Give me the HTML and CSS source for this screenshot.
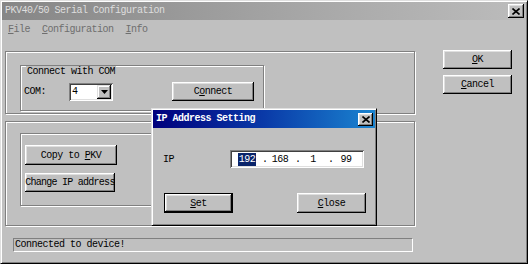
FILE: index.html
```html
<!DOCTYPE html>
<html lang="en">
<head>
    <meta charset="UTF-8">
    <title>PKV40/50 Serial Configuration</title>
    <link rel="stylesheet" href="styles.css">
</head>
<body>
    <div class="window">
        <div class="titlebar titlebar-inactive">
            <span class="title-text">PKV40/50 Serial Configuration</span>
            <span class="caption-btn">
                <svg width="8" height="7" viewBox="0 0 8 7"><path d="M0.5 0.5L7.5 6.5M7.5 0.5L0.5 6.5"/></svg>
            </span>
        </div>
        <div class="menubar">
            <span class="menu-item"><u>F</u>ile</span>
            <span class="menu-item"><u>C</u>onfiguration</span>
            <span class="menu-item"><u>I</u>nfo</span>
        </div>
        <div class="client">
            <div class="main-row">
                <div class="left-col">
                    <div class="panel panel-top">
                        <div class="group group-com">
                            <span class="group-title">Connect with COM</span>
                            <div class="com-row">
                                <span class="com-label">COM:</span>
                                <div class="combo">
                                    <span class="combo-value">4</span>
                                    <span class="combo-btn">
                                        <svg width="7" height="4" viewBox="0 0 7 4"><polygon points="0,0 7,0 3.5,4"/></svg>
                                    </span>
                                </div>
                                <button class="btn btn-connect"><span>C<u>o</u>nnect</span></button>
                            </div>
                        </div>
                    </div>
                    <div class="panel panel-bottom">
                        <div class="group group-actions">
                            <button class="btn btn-copy"><span>Copy to <u>P</u>KV</span></button>
                            <button class="btn btn-change"><span>Change IP address</span></button>
                        </div>
                    </div>
                </div>
                <div class="right-col">
                    <button class="btn btn-side"><span><u>O</u>K</span></button>
                    <button class="btn btn-side"><span><u>C</u>ancel</span></button>
                </div>
            </div>
            <div class="statusbar">Connected to device!</div>
        </div>

        <div class="dialog">
            <div class="titlebar titlebar-active">
                <span class="title-text">IP Address Setting</span>
                <span class="caption-btn caption-btn-small">
                    <svg width="8" height="7" viewBox="0 0 8 7"><path d="M0.5 0.5L7.5 6.5M7.5 0.5L0.5 6.5"/></svg>
                </span>
            </div>
            <div class="dialog-body">
                <div class="ip-row">
                    <span class="ip-label">IP</span>
                    <div class="ip-field">
                        <span class="ip-part"><span class="ip-selected">192</span></span>
                        <span class="ip-dot">.</span>
                        <span class="ip-part">168</span>
                        <span class="ip-dot">.</span>
                        <span class="ip-part">1</span>
                        <span class="ip-dot">.</span>
                        <span class="ip-part">99</span>
                    </div>
                </div>
                <div class="dialog-buttons">
                    <button class="btn btn-dialog btn-default"><span><u>S</u>et</span></button>
                    <button class="btn btn-dialog"><span><u>C</u>lose</span></button>
                </div>
            </div>
        </div>
    </div>
</body>
</html>
```

FILE: styles.css
```css
body, html {
    margin: 0;
    padding: 0;
    background-color: #c0c0c0;
    font-family: "Liberation Mono", "DejaVu Sans Mono", monospace;
    font-size: 10px;
    letter-spacing: -0.5px;
    color: black;
}
.window {
    position: relative;
    width: 528px;
    height: 264px;
    box-sizing: border-box;
    padding: 1px;
    border: 1px solid;
    border-color: #dfdfdf #000 #000 #dfdfdf;
    box-shadow: inset 1px 1px 0 #fff, inset -1px -1px 0 #808080;
    background-color: #c0c0c0;
    display: flex;
    flex-direction: column;
}
.titlebar {
    height: 18px;
    display: flex;
    align-items: center;
    justify-content: space-between;
    padding: 0 2px 0 3px;
    flex-shrink: 0;
}
.titlebar-inactive {
    background: linear-gradient(to right, #868686, #a8a8a8 60%, #bcbcbc);
    color: #dedede;
}
.titlebar-active {
    background: linear-gradient(to right, #00007c, #0a3aa8 50%, #1a84d0);
    color: white;
    font-weight: bold;
}
.title-text {
    line-height: 18px;
    white-space: nowrap;
}
.caption-btn {
    width: 16px;
    height: 14px;
    box-sizing: border-box;
    background-color: #c0c0c0;
    box-shadow: inset -1px -1px 0 #000, inset 1px 1px 0 #fff, inset -2px -2px 0 #808080, inset 2px 2px 0 #dfdfdf;
    display: flex;
    align-items: center;
    justify-content: center;
}
.caption-btn-small {
    width: 15px;
    height: 13px;
}
.caption-btn svg path {
    stroke: black;
    stroke-width: 1.6;
    fill: none;
}
.menubar {
    height: 18px;
    display: flex;
    align-items: center;
    color: #6e6e6e;
    flex-shrink: 0;
}
.menu-item {
    padding: 0 6px;
    white-space: nowrap;
}
.client {
    flex: 1;
    padding: 12px 0 0 3px;
}
.main-row {
    display: flex;
}
.left-col {
    width: 410px;
}
.panel {
    box-sizing: border-box;
    border: 1px solid #808080;
    box-shadow: 1px 1px 0 #fff, inset 1px 1px 0 #fff;
}
.panel-top {
    margin-top: 1px;
    height: 63px;
    padding: 13px 0 0 14px;
}
.panel-bottom {
    margin-top: 7px;
    height: 105px;
    padding: 11px 0 0 14px;
}
.group {
    box-sizing: border-box;
    width: 244px;
    border: 1px solid #808080;
    box-shadow: 1px 1px 0 #fff, inset 1px 1px 0 #fff;
}
.group-com {
    height: 46px;
}
.group-title {
    display: inline-block;
    line-height: 12px;
    margin: -7px 0 0 5px;
    padding: 0 1px;
    background-color: #c0c0c0;
    white-space: nowrap;
}
.com-row {
    display: flex;
    align-items: center;
    height: 19px;
    margin-top: 4px;
    padding-left: 3px;
}
.com-label {
    width: 45px;
}
.combo {
    width: 44px;
    height: 18px;
    box-sizing: border-box;
    background-color: white;
    box-shadow: inset 1px 1px 0 #808080, inset -1px -1px 0 #fff, inset 2px 2px 0 #404040, inset -2px -2px 0 #dfdfdf;
    display: flex;
    align-items: center;
    justify-content: space-between;
    padding: 2px;
}
.combo-value {
    padding-left: 1px;
}
.combo-btn {
    width: 14px;
    height: 14px;
    box-sizing: border-box;
    background-color: #c0c0c0;
    box-shadow: inset -1px -1px 0 #000, inset 1px 1px 0 #dfdfdf, inset -2px -2px 0 #808080, inset 2px 2px 0 #fff;
    display: flex;
    align-items: center;
    justify-content: center;
}
.btn {
    font: inherit;
    letter-spacing: inherit;
    color: black;
    background-color: #c0c0c0;
    border: none;
    padding: 0;
    box-shadow: inset -1px -1px 0 #000, inset 1px 1px 0 #fff, inset -2px -2px 0 #808080, inset 2px 2px 0 #dfdfdf;
    overflow: hidden;
    white-space: nowrap;
    display: flex;
    align-items: center;
    justify-content: center;
}
.btn span {
    flex-shrink: 0;
}
.btn-connect {
    width: 82px;
    height: 19px;
    margin-left: 59px;
}
.group-actions {
    height: 73px;
    padding: 11px 0 0 4px;
}
.btn-copy {
    width: 92px;
    height: 20px;
}
.btn-change {
    width: 90px;
    height: 19px;
    margin-top: 8px;
    letter-spacing: -0.75px;
}
.right-col {
    margin-left: 28px;
}
.btn-side {
    width: 69px;
    height: 19px;
    margin-bottom: 6px;
}
.statusbar {
    width: 400px;
    height: 14px;
    box-sizing: border-box;
    margin: 12px 0 0 8px;
    padding-left: 1px;
    border: 1px solid;
    border-color: #808080 #fff #fff #808080;
    line-height: 12px;
    white-space: nowrap;
}
.dialog {
    position: absolute;
    left: 150px;
    top: 107px;
    width: 226px;
    height: 118px;
    box-sizing: border-box;
    padding: 1px;
    border: 1px solid;
    border-color: #dfdfdf #000 #000 #dfdfdf;
    box-shadow: inset 1px 1px 0 #fff, inset -1px -1px 0 #808080;
    background-color: #c0c0c0;
}
.dialog-body {
    padding: 22px 0 0 10px;
}
.ip-row {
    display: flex;
    align-items: center;
}
.ip-label {
    width: 67px;
}
.ip-field {
    width: 134px;
    height: 18px;
    box-sizing: border-box;
    background-color: white;
    box-shadow: inset 1px 1px 0 #808080, inset -1px -1px 0 #fff, inset 2px 2px 0 #404040, inset -2px -2px 0 #dfdfdf;
    display: flex;
    align-items: center;
    padding: 0 2px;
}
.ip-part {
    width: 30px;
    text-align: center;
}
.ip-dot {
    width: 3px;
    text-align: center;
}
.ip-selected {
    background-color: #0a246a;
    color: white;
    padding: 1px 1px;
}
.dialog-buttons {
    display: flex;
    gap: 64px;
    margin-top: 25px;
    padding-left: 1px;
}
.btn-dialog {
    width: 69px;
    height: 20px;
}
.btn-default {
    box-shadow: inset 0 0 0 1px #000, inset -2px -2px 0 #000, inset 2px 2px 0 #fff, inset -3px -3px 0 #808080, inset 3px 3px 0 #dfdfdf;
}
```
